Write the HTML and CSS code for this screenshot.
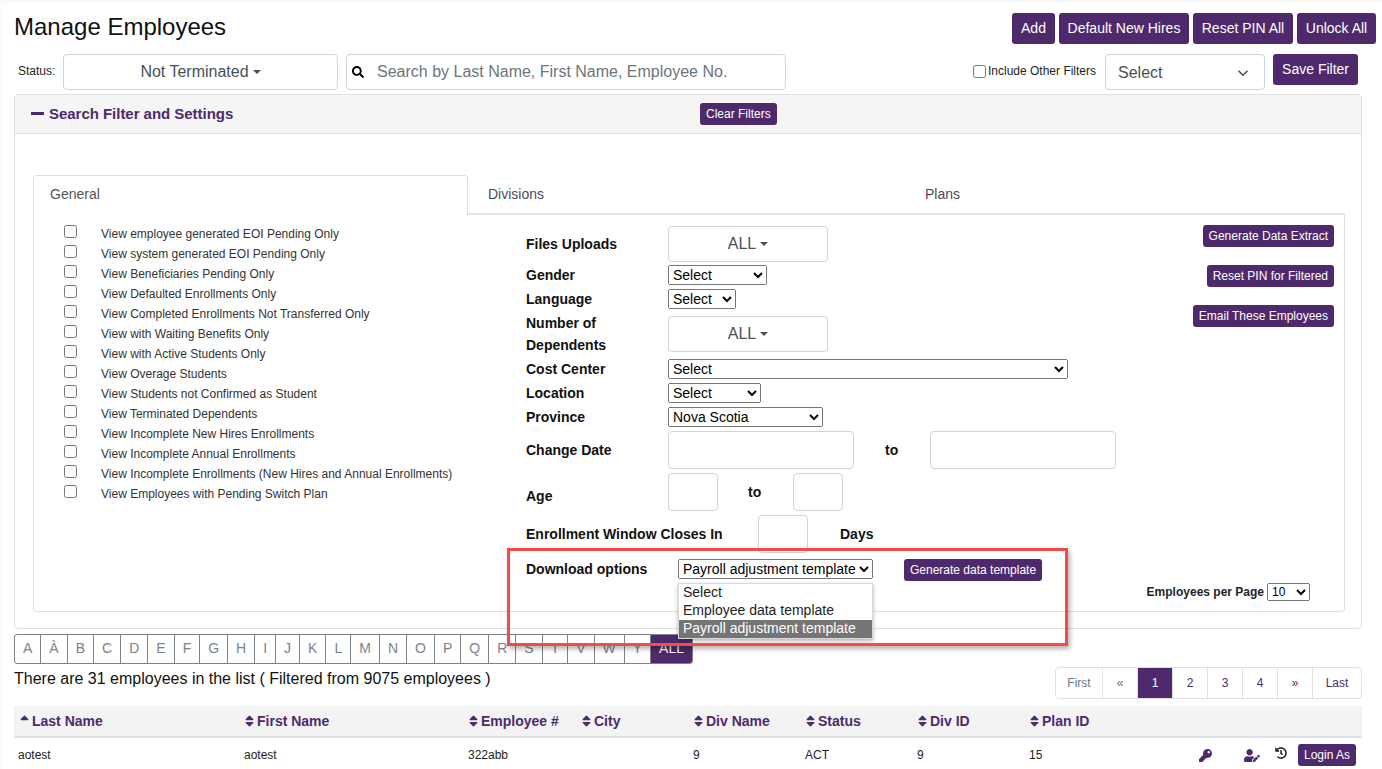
FILE: index.html
```html
<!DOCTYPE html>
<html lang="en">
<head>
  <meta charset="UTF-8">
  <title>Manage Employees</title>
  <link rel="stylesheet" href="styles.css">
</head>
<body>

<svg class="defs" width="0" height="0">
  <symbol id="ico-sort" viewBox="0 0 320 512"><path d="M41 288h238c21.4 0 32.1 25.9 17 41L177 448c-9.4 9.4-24.6 9.4-33.9 0L24 329c-15.1-15.1-4.4-41 17-41zm255-105L177 64c-9.4-9.4-24.6-9.4-33.9 0L24 183c-15.1 15.1-4.4 41 17 41h238c21.4 0 32.1-25.9 17-41z"/></symbol>
  <symbol id="ico-sort-up" viewBox="0 0 320 512"><path d="M296 183L177 64c-9.4-9.4-24.6-9.4-33.9 0L24 183c-15.1 15.1-4.4 41 17 41h238c21.4 0 32.1-25.9 17-41z"/></symbol>
</svg>

<div class="page">
  <div class="title-row">
    <h1>Manage Employees</h1>
    <div class="title-btns">
      <button class="btn b-add">Add</button>
      <button class="btn b-hires">Default New Hires</button>
      <button class="btn b-reset">Reset PIN All</button>
      <button class="btn b-unlock">Unlock All</button>
    </div>
  </div>

  <div class="toolbar">
    <span class="status-label">Status:</span>
    <button class="drop status-drop">Not Terminated<span class="caret"></span></button>
    <div class="search">
      <svg class="search-ico" viewBox="0 0 512 512"><path d="M505 442.7L405.3 343c-4.5-4.5-10.6-7-17-7H372c27.6-35.3 44-79.7 44-128C416 93.1 322.9 0 208 0S0 93.1 0 208s93.1 208 208 208c48.3 0 92.7-16.4 128-44v16.3c0 6.4 2.5 12.5 7 17l99.7 99.7c9.4 9.4 24.6 9.4 33.9 0l28.3-28.3c9.4-9.4 9.4-24.6.1-34zM208 336c-70.7 0-128-57.2-128-128 0-70.7 57.2-128 128-128 70.7 0 128 57.2 128 128 0 70.7-57.2 128-128 128z"/></svg>
      <input type="text" placeholder="Search by Last Name, First Name, Employee No.">
    </div>
    <label class="include"><input type="checkbox">Include Other Filters</label>
    <div class="filter-select">
      <span>Select</span>
      <svg viewBox="0 0 16 16" width="12" height="12"><path d="M2 5l6 6 6-6" fill="none" stroke="#444" stroke-width="1.8"/></svg>
    </div>
    <button class="btn save-btn">Save Filter</button>
  </div>

  <div class="panel">
    <div class="panel-head">
      <div class="panel-title"><span class="minus"></span>Search Filter and Settings</div>
      <button class="btn btn-sm clear-btn">Clear Filters</button>
    </div>
    <div class="panel-body">
      <div class="tabs">
        <div class="tab tab-general active">General</div>
        <div class="tab tab-divisions">Divisions</div>
        <div class="tab tab-plans">Plans</div>
      </div>
      <div class="tab-content">
        <div class="checks">
          <label class="check"><input type="checkbox"><span>View employee generated EOI Pending Only</span></label>
          <label class="check"><input type="checkbox"><span>View system generated EOI Pending Only</span></label>
          <label class="check"><input type="checkbox"><span>View Beneficiaries Pending Only</span></label>
          <label class="check"><input type="checkbox"><span>View Defaulted Enrollments Only</span></label>
          <label class="check"><input type="checkbox"><span>View Completed Enrollments Not Transferred Only</span></label>
          <label class="check"><input type="checkbox"><span>View with Waiting Benefits Only</span></label>
          <label class="check"><input type="checkbox"><span>View with Active Students Only</span></label>
          <label class="check"><input type="checkbox"><span>View Overage Students</span></label>
          <label class="check"><input type="checkbox"><span>View Students not Confirmed as Student</span></label>
          <label class="check"><input type="checkbox"><span>View Terminated Dependents</span></label>
          <label class="check"><input type="checkbox"><span>View Incomplete New Hires Enrollments</span></label>
          <label class="check"><input type="checkbox"><span>View Incomplete Annual Enrollments</span></label>
          <label class="check"><input type="checkbox"><span>View Incomplete Enrollments (New Hires and Annual Enrollments)</span></label>
          <label class="check"><input type="checkbox"><span>View Employees with Pending Switch Plan</span></label>
        </div>

        <div class="form">
          <div class="row row-files">
            <span class="lbl">Files Uploads</span>
            <button class="drop all-drop">ALL<span class="caret"></span></button>
          </div>
          <div class="row row-sel">
            <span class="lbl">Gender</span>
            <select class="sel-gender"><option>Select</option></select>
          </div>
          <div class="row row-sel">
            <span class="lbl">Language</span>
            <select class="sel-lang"><option>Select</option></select>
          </div>
          <div class="row row-deps">
            <span class="lbl lbl-two">Number of Dependents</span>
            <button class="drop all-drop">ALL<span class="caret"></span></button>
          </div>
          <div class="row row-sel">
            <span class="lbl">Cost Center</span>
            <select class="sel-cost"><option>Select</option></select>
          </div>
          <div class="row row-sel">
            <span class="lbl">Location</span>
            <select class="sel-loc"><option>Select</option></select>
          </div>
          <div class="row row-sel">
            <span class="lbl">Province</span>
            <select class="sel-prov"><option>Nova Scotia</option></select>
          </div>
          <div class="row row-date">
            <span class="lbl">Change Date</span>
            <input class="inp inp-date" type="text">
            <span class="lbl to-date">to</span>
            <input class="inp inp-date" type="text">
          </div>
          <div class="row row-age">
            <span class="lbl lbl-low">Age</span>
            <input class="inp inp-num" type="text">
            <span class="lbl to-age">to</span>
            <input class="inp inp-num" type="text">
          </div>
          <div class="row row-age">
            <span class="lbl lbl-wide">Enrollment Window Closes In</span>
            <input class="inp inp-num" type="text">
            <span class="lbl days">Days</span>
          </div>
          <div class="row row-download">
            <span class="lbl lbl-dl">Download options</span>
            <div class="dl-wrap">
              <select class="sel-dl"><option>Payroll adjustment template</option></select>
              <div class="dl-list">
                <div class="dl-opt">Select</div>
                <div class="dl-opt">Employee data template</div>
                <div class="dl-opt selected">Payroll adjustment template</div>
              </div>
            </div>
            <button class="btn btn-sm gen-btn">Generate data template</button>
          </div>
        </div>

        <div class="side">
          <button class="btn btn-sm">Generate Data Extract</button>
          <button class="btn btn-sm">Reset PIN for Filtered</button>
          <button class="btn btn-sm">Email These Employees</button>
          <div class="per-page">
            <span>Employees per Page</span>
            <select class="sel-per"><option>10</option></select>
          </div>
        </div>
      </div>
    </div>
  </div>

  <div class="alpha">
    <a>A</a><a>À</a><a>B</a><a>C</a><a>D</a><a>E</a><a>F</a><a>G</a><a>H</a><a>I</a><a>J</a><a>K</a><a>L</a><a>M</a><a>N</a><a>O</a><a>P</a><a>Q</a><a>R</a><a>S</a><a>T</a><a>V</a><a>W</a><a>Y</a><a class="on">ALL</a>
  </div>

  <div class="list-info">
    <div class="count">There are 31 employees in the list ( Filtered from 9075 employees )</div>
    <div class="pager">
      <a class="muted p-first">First</a><a class="muted p-prev">«</a><a class="on p-num">1</a><a class="p-num">2</a><a class="p-num">3</a><a class="p-num">4</a><a class="red p-next">»</a><a class="p-last">Last</a>
    </div>
  </div>

  <table class="emp-table">
    <colgroup>
      <col class="c-wide1"><col class="c-wide2"><col class="c-emp"><col class="c-std"><col class="c-std"><col class="c-std"><col class="c-std"><col class="c-std"><col class="c-act">
    </colgroup>
    <thead>
      <tr>
        <th><svg class="sort"><use href="#ico-sort-up"/></svg>Last Name</th>
        <th><svg class="sort"><use href="#ico-sort"/></svg>First Name</th>
        <th><svg class="sort"><use href="#ico-sort"/></svg>Employee #</th>
        <th><svg class="sort"><use href="#ico-sort"/></svg>City</th>
        <th><svg class="sort"><use href="#ico-sort"/></svg>Div Name</th>
        <th><svg class="sort"><use href="#ico-sort"/></svg>Status</th>
        <th><svg class="sort"><use href="#ico-sort"/></svg>Div ID</th>
        <th><svg class="sort"><use href="#ico-sort"/></svg>Plan ID</th>
        <th></th>
      </tr>
    </thead>
    <tbody>
      <tr>
        <td>aotest</td>
        <td>aotest</td>
        <td>322abb</td>
        <td></td>
        <td>9</td>
        <td>ACT</td>
        <td>9</td>
        <td>15</td>
        <td>
          <div class="actions">
            <svg class="act-key" viewBox="0 0 512 512"><path d="M512 176.001C512 273.203 433.202 352 336 352c-11.22 0-22.19-1.062-32.827-3.069l-24.012 27.014A23.999 23.999 0 0 1 261.223 384H224v40c0 13.255-10.745 24-24 24h-40v40c0 13.255-10.745 24-24 24H24c-13.255 0-24-10.745-24-24v-78.059c0-6.365 2.529-12.47 7.029-16.971l161.802-161.802C163.108 213.814 160 195.271 160 176 160 78.798 238.797.001 335.999 0 433.488-.001 512 78.511 512 176.001zM336 128c0 26.51 21.49 48 48 48s48-21.49 48-48-21.49-48-48-48-48 21.49-48 48z"/></svg>
            <svg class="act-user" viewBox="0 0 640 512"><path d="M224 256c70.7 0 128-57.3 128-128S294.7 0 224 0 96 57.3 96 128s57.3 128 128 128zm89.6 32h-16.7c-22.2 10.2-46.9 16-72.9 16s-50.6-5.8-72.9-16h-16.7C60.2 288 0 348.2 0 422.4V464c0 26.5 21.5 48 48 48h274.9c-2.4-6.8-3.4-14-2.6-21.3l6.8-60.9 1.2-11.1 7.9-7.9 77.3-77.3c-24.5-27.7-60-45.5-99.9-45.5zm45.3 145.3l-6.8 61c-1.1 10.2 7.5 18.8 17.6 17.6l60.9-6.8 137.9-137.9-71.7-71.7-137.9 137.8zM633 268.9L595.1 231c-9.3-9.3-24.5-9.3-33.8 0l-37.8 37.8-4.1 4.1 71.8 71.7 41.8-41.8c9.3-9.4 9.3-24.5 0-33.9z"/></svg>
            <svg class="act-hist" viewBox="0 0 512 512"><path d="M504 255.531c.253 136.64-111.18 248.372-247.82 248.468-59.015.042-113.223-20.53-155.822-54.911-11.077-8.94-11.905-25.541-1.839-35.607l11.267-11.267c8.609-8.609 22.353-9.551 31.891-1.984C173.062 425.135 212.781 440 256 440c101.705 0 184-82.311 184-184 0-101.705-82.311-184-184-184-48.814 0-93.149 18.969-126.068 49.932l50.754 50.754c10.08 10.08 2.941 27.314-11.313 27.314H24c-8.837 0-16-7.163-16-16V38.627c0-14.254 17.234-21.393 27.314-11.314l49.372 49.372C129.209 34.136 189.552 8 256 8c136.81 0 247.747 110.78 248 247.531zm-180.912 78.784l9.823-12.63c8.138-10.463 6.253-25.542-4.21-33.679L288 256.349V152c0-13.255-10.745-24-24-24h-16c-13.255 0-24 10.745-24 24v135.651l65.409 50.874c10.463 8.137 25.541 6.253 33.679-4.21z"/></svg>
            <button class="btn btn-sm login-btn">Login As</button>
          </div>
        </td>
      </tr>
    </tbody>
  </table>
</div>

<!-- red callout drawn over the screenshot -->
<div class="callout"></div>

</body>
</html>
```

FILE: styles.css
```css
* {
  box-sizing: border-box;
}
html, body {
  margin: 0;
  height: 769px;
  overflow: hidden;
}
body {
  background: #fff;
  border-top: 3px solid #f8f9fa;
  border-left: 1px solid #f8f9fa;
  font-family: "Liberation Sans", Arial, sans-serif;
  font-size: 14px;
  color: #212529;
}
.defs {
  position: absolute;
}
button, input, select {
  font-family: inherit;
}

.page {
  padding: 0 6px 0 13px;
}

/* buttons */
.btn {
  background: #4e2a6c;
  color: #fff;
  border: 0;
  border-radius: 3px;
  font-size: 14px;
  height: 31px;
  padding: 0 0 2px;
  white-space: nowrap;
}
.btn-sm {
  font-size: 12px;
  height: 22px;
  padding: 0 6px;
}
.b-add {
  width: 43px;
}
.b-hires {
  width: 130px;
}
.b-reset {
  width: 100px;
}
.b-unlock {
  width: 79px;
}
.drop {
  background: #fff;
  border: 1px solid #ced4da;
  border-radius: 4px;
  color: #495057;
  font-size: 16px;
  height: 36px;
}
.caret {
  display: inline-block;
  margin-left: 4px;
  vertical-align: 3px;
  border-top: 4px solid #495057;
  border-left: 4px solid transparent;
  border-right: 4px solid transparent;
}

/* title */
.title-row {
  display: flex;
  justify-content: space-between;
  height: 51px;
  padding-top: 10px;
}
h1 {
  margin: 0;
  font-size: 24px;
  font-weight: 400;
  line-height: 28px;
  color: #111;
}
.title-btns {
  display: flex;
  gap: 4px;
}

/* toolbar */
.toolbar {
  display: flex;
  align-items: flex-start;
  height: 40px;
}
.status-label {
  width: 49px;
  padding-left: 4px;
  font-size: 12px;
  line-height: 34px;
}
.status-drop {
  width: 275px;
}
.search {
  display: flex;
  align-items: center;
  width: 440px;
  height: 36px;
  margin-left: 8px;
  padding-left: 5px;
  border: 1px solid #ced4da;
  border-radius: 4px;
}
.search-ico {
  width: 12px;
  height: 12px;
  flex: none;
}
.search input {
  flex: 1;
  min-width: 0;
  border: 0;
  outline: 0;
  padding: 0 0 0 13px;
  font-size: 16px;
  background: transparent;
}
.search input::placeholder {
  color: #6c757d;
}
.include {
  display: flex;
  align-items: center;
  height: 34px;
  margin-left: 187px;
  font-size: 12px;
  white-space: nowrap;
}
.include input {
  margin: 0 2px 0 0;
}
.filter-select {
  display: flex;
  align-items: center;
  justify-content: space-between;
  width: 160px;
  height: 36px;
  margin-left: 9px;
  padding: 1px 15px 0 12px;
  border: 1px solid #ced4da;
  border-radius: 4px;
  font-size: 16px;
  color: #495057;
}
.save-btn {
  width: 85px;
  margin-left: 8px;
}

/* panel */
.panel {
  width: 1348px;
  height: 535px;
  border: 1px solid #dfdfdf;
  border-radius: 4px;
}
.panel-head {
  display: flex;
  align-items: center;
  height: 39px;
  background: #f5f5f5;
  border-bottom: 1px solid #dfdfdf;
}
.panel-title {
  display: flex;
  align-items: center;
  width: 685px;
  padding: 0 0 1px 16px;
  font-size: 15px;
  font-weight: 700;
  letter-spacing: -.03px;
  color: #4e2a6c;
}
.minus {
  width: 13px;
  height: 3px;
  margin-right: 5px;
  background: #4e2a6c;
}
.clear-btn {
  padding: 0 6px;
}
.panel-body {
  padding: 41px 16px 0 18px;
}

/* tabs */
.tabs {
  display: flex;
  height: 40px;
  border-bottom: 2px solid #e4e4e4;
}
.tab {
  padding: 11px 0 0 20px;
  font-size: 14px;
  color: #4a4a5a;
}
.tab-general {
  width: 435px;
  padding-left: 16px;
}
.tab-divisions {
  width: 437px;
}
.tab-plans {
  width: 440px;
}
.tab.active {
  height: 41px;
  padding-top: 10px;
  background: #fff;
  color: #555;
  border: 1px solid #dfdfdf;
  border-bottom: 0;
  border-radius: 4px 4px 0 0;
}
.tab-content {
  display: flex;
  height: 398px;
  margin-top: -1px;
  border: 1px solid #dfdfdf;
  border-top: 0;
  border-radius: 0 0 4px 4px;
}

/* left checkboxes */
.checks {
  width: 491px;
  flex: none;
  padding: 10px 0 0 30px;
}
.check {
  display: flex;
  align-items: flex-start;
  height: 20px;
  font-size: 12px;
  color: #333;
}
.check input {
  width: 13px;
  height: 13px;
  margin: 1px 24px 0 0;
}
.check span {
  line-height: 19px;
  margin-top: 1px;
}

/* middle form */
.form {
  width: 592px;
  flex: none;
  padding-top: 12px;
}
.row {
  display: flex;
  align-items: center;
}
.lbl {
  width: 143px;
  flex: none;
  padding-left: 1px;
  font-size: 14px;
  font-weight: 700;
  color: #111;
}
.lbl-two {
  line-height: 22px;
  padding-right: 30px;
}
.lbl-low {
  padding-top: 8px;
}
.lbl-wide {
  width: 233px;
}
.lbl-dl {
  width: 153px;
}
.row-files {
  height: 36px;
  margin-bottom: 1px;
}
.row-sel {
  height: 24px;
}
.row-deps {
  height: 46px;
}
.row-date {
  height: 38px;
  margin-top: 2px;
}
.row-age {
  height: 38px;
  margin-top: 4px;
}
.row-download {
  align-items: flex-start;
  margin-top: 6px;
}
.row-download .lbl {
  line-height: 20px;
}
.all-drop {
  width: 160px;
}
.row select {
  height: 20px;
  font-size: 14px;
}
.sel-gender {
  width: 99px;
}
.sel-lang {
  width: 68px;
}
.sel-cost {
  width: 400px;
}
.sel-loc {
  width: 93px;
}
.sel-prov {
  width: 155px;
}
.inp {
  height: 38px;
  border: 1px solid #ced4da;
  border-radius: 4px;
}
.inp-date {
  width: 186px;
}
.inp-num {
  width: 50px;
}
.to-date {
  width: 76px;
  padding-left: 31px;
}
.to-age {
  width: 75px;
  padding-left: 30px;
}
.days {
  width: auto;
  margin-left: 31px;
}
.dl-wrap {
  position: relative;
  width: 195px;
}
.sel-dl {
  width: 195px;
}
.dl-list {
  position: absolute;
  top: 24px;
  left: 0;
  width: 195px;
  background: #fff;
  border: 1px solid #d8d8d8;
  box-shadow: 0 2px 4px rgba(0, 0, 0, .3);
  z-index: 5;
}
.dl-opt {
  height: 18px;
  padding-left: 4px;
  font-size: 14px;
  line-height: 17px;
  color: #222;
}
.dl-opt.selected {
  background: #757575;
  color: #fff;
}
.gen-btn {
  margin-left: 31px;
}

/* right side */
.side {
  flex: 1;
  display: flex;
  flex-direction: column;
  align-items: flex-end;
  gap: 18px;
  padding: 11px 10px 10px 0;
}
.per-page {
  display: flex;
  align-items: center;
  gap: 3px;
  margin-top: auto;
  margin-right: 24px;
  font-size: 12px;
  font-weight: 700;
  white-space: nowrap;
}
.sel-per {
  width: 43px;
  height: 18px;
  font-size: 12px;
}

/* alphabet */
.alpha {
  display: inline-flex;
  height: 30px;
  margin: 5px 0 1px;
  vertical-align: top;
  border: 1px solid #7c848b;
  border-radius: 3px;
  overflow: hidden;
}
.alpha a {
  padding: 0 8px;
  font-size: 14px;
  line-height: 27px;
  color: #7b838a;
  border-right: 1px solid #7c848b;
}
.alpha a.on {
  background: #4e2a6c;
  color: #fff;
  border-right: 0;
}

/* count + pager */
.list-info {
  display: flex;
  justify-content: space-between;
  height: 41px;
  padding-right: 14px;
}
.count {
  font-size: 16px;
  line-height: 24px;
  margin-top: 2px;
  color: #111;
}
.pager {
  display: flex;
  height: 32px;
  margin-top: 2px;
  border: 1px solid #dee2e6;
  border-radius: 4px;
  overflow: hidden;
}
.pager a {
  font-size: 12px;
  line-height: 30px;
  text-align: center;
  color: #4e2a6c;
  border-left: 1px solid #dee2e6;
}
.pager a:first-child {
  border-left: 0;
}
.pager .muted {
  color: #6c757d;
}
.pager .red {
  color: #8c2340;
}
.pager .on {
  background: #4e2a6c;
  color: #fff;
}
.p-first {
  width: 46px;
}
.p-prev {
  width: 35px;
}
.p-num {
  width: 35px;
}
.p-next {
  width: 35px;
}
.p-last {
  width: 49px;
}

/* table */
.emp-table {
  width: 1348px;
  table-layout: fixed;
  border-collapse: collapse;
}
.c-wide1 {
  width: 226px;
}
.c-wide2 {
  width: 224px;
}
.c-emp {
  width: 113px;
}
.c-std {
  width: 112px;
}
.c-act {
  width: 225px;
}
th {
  height: 31px;
  padding: 0 4px;
  background: #f3f3f3;
  border-bottom: 2px solid #dee2e6;
  text-align: left;
  font-size: 14px;
  color: #4e2a6c;
}
th:first-child {
  padding-left: 5px;
}
.sort {
  width: 9px;
  height: 14px;
  margin: 0 3px 0 1px;
  vertical-align: -2px;
  fill: #4e2a6c;
}
td {
  height: 34px;
  padding: 0 4px;
  font-size: 12px;
  color: #222;
}
.actions {
  display: flex;
  align-items: center;
  height: 30px;
  padding-left: 58px;
}
.actions svg {
  fill: #4e2a6c;
}
.act-key {
  width: 13px;
  height: 13px;
  margin: 1px 0 0 0;
}
.act-user {
  width: 16px;
  height: 13px;
  margin: 1px 0 0 32px;
}
.act-hist {
  width: 12px;
  height: 12px;
  margin: 0 0 3px 15px;
  fill: #222 !important;
}
.login-btn {
  width: 58px;
  margin-left: 11px;
  padding: 0;
}

/* annotation */
.callout {
  position: absolute;
  left: 507px;
  top: 548px;
  width: 561px;
  height: 98px;
  border: 3px solid #f44a4a;
  box-shadow: 2px 3px 5px rgba(0, 0, 0, .3);
  z-index: 10;
}
```
